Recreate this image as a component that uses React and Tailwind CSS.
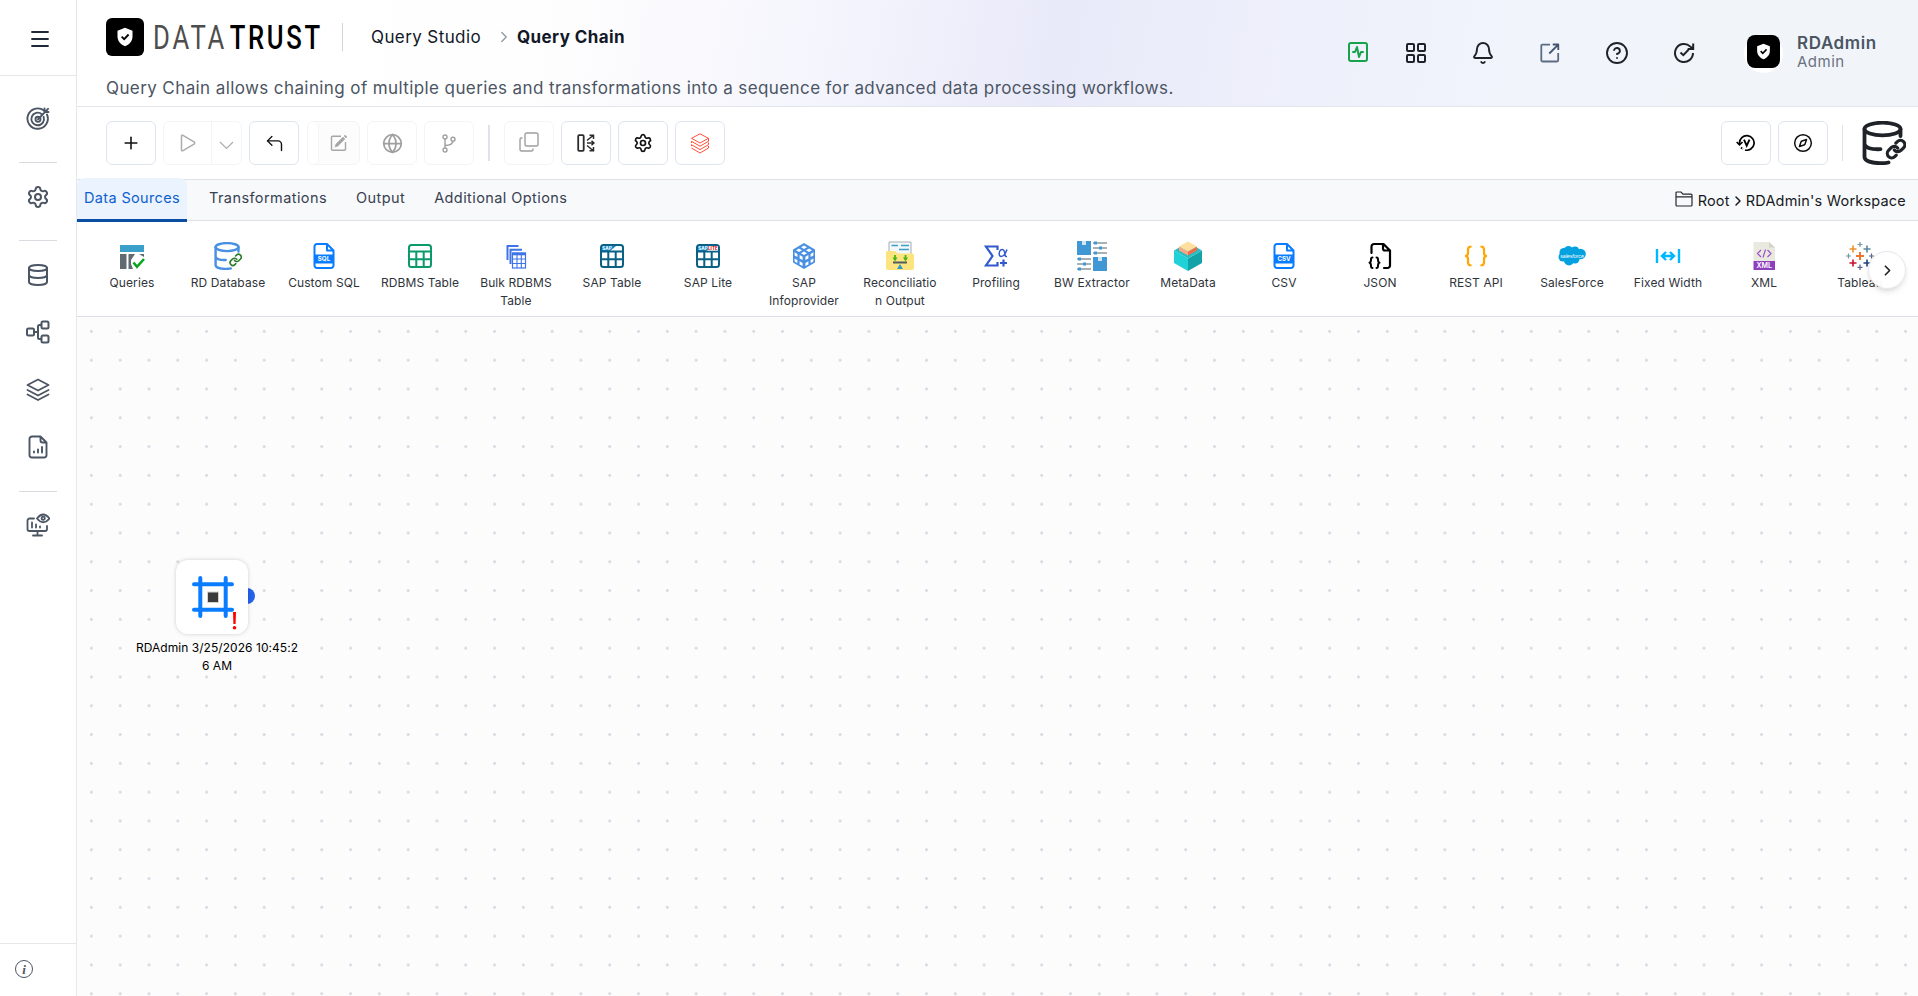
import React from 'react';
import { Menu, Settings, Database, Plus, ChevronRight, CornerUpLeft, Globe, Bell, CircleHelp, Compass, LayoutGrid, SquareActivity } from 'lucide-react';

const Shield = ({ size }) => (
    <svg width={size} height={size} viewBox="0 0 24 24">
        <path d="M12 1 L21 4.5 V11 C21 17 17 21 12 23 C7 21 3 17 3 11 V4.5 Z" fill="#fff" />
        <path d="M8 11.5 L11 14.5 L16.3 9" fill="none" stroke="#000" strokeWidth="2.2" />
    </svg>
);

// Sidebar icons
const TargetIcon = () => (
    <svg width="24" height="24" viewBox="0 0 24 24" fill="none" stroke="currentColor" strokeWidth="1.9" strokeLinecap="round">
        <path d="M18 3.6 A10.2 10.2 0 1 0 21 7.5" />
        <path d="M15.8 7.2 A6.3 6.3 0 1 0 17.6 9.8" />
        <circle cx="12" cy="12.3" r="2.5" />
        <path d="M12 12.3 L22 1.8 M18.5 4.5 V1.5 M19 5 H22.5" />
    </svg>
);

const FlowIcon = () => (
    <svg width="24" height="24" viewBox="0 0 24 24" fill="none" stroke="currentColor" strokeWidth="2">
        <rect x="1" y="8.5" width="7" height="7" rx="1.5" />
        <rect x="15.5" y="1.5" width="7" height="7" rx="1.5" />
        <rect x="15.5" y="15.5" width="7" height="7" rx="1.5" />
        <path d="M8 12 H12 M15.5 5 H13.5 A1.5 1.5 0 0 0 12 6.5 V17.5 A1.5 1.5 0 0 0 13.5 19 H15.5" />
    </svg>
);

const LayersIcon = () => (
    <svg width="24" height="24" viewBox="0 0 24 24" fill="none" stroke="currentColor" strokeWidth="1.8" strokeLinejoin="round" strokeLinecap="round">
        <path d="M12 1.5 L22.5 7 L12 12.5 L1.5 7 Z M1.5 12 L12 17.5 L22.5 12 M1.5 16.5 L12 22 L22.5 16.5" />
    </svg>
);

const ReportIcon = () => (
    <svg width="24" height="24" viewBox="0 0 24 24" fill="none" stroke="currentColor" strokeWidth="1.9" strokeLinejoin="round" strokeLinecap="round">
        <path d="M14.5 1.5 H6 A2.5 2.5 0 0 0 3.5 4 V20 A2.5 2.5 0 0 0 6 22.5 H18 A2.5 2.5 0 0 0 20.5 20 V7.5 Z M14.5 1.5 V5.5 A2 2 0 0 0 16.5 7.5 H20.5 M8 16.5 V17.5 M12 14.5 V17.5 M16 12 V17.5" />
    </svg>
);

const MonitorIcon = () => (
    <svg width="24" height="24" viewBox="0 0 24 24" fill="none" stroke="currentColor" strokeWidth="1.8" strokeLinecap="round">
        <path d="M8 5.5 H3.5 A2 2 0 0 0 1.5 7.5 V16 A2 2 0 0 0 3.5 18 H19 A2 2 0 0 0 21 16 V13 M11.5 18 V22 M7 22.5 H16 M6 9.5 V14.5 M10 11.5 V14.5 M14 13.5 V14.5" />
        <path d="M11 5.5 Q17 -2.5 23.5 5.5 Q17 13 11 5.5 Z" />
        <circle cx="17.2" cy="5.3" r="1.6" />
    </svg>
);

// Header icons
const ExternalIcon = () => (
    <svg width="20" height="20" viewBox="0 0 20 20" fill="none" stroke="#5b6b82" strokeWidth="1.8" strokeLinejoin="round">
        <path d="M10 1.7 H2.5 A1 1 0 0 0 1.3 2.9 V17.3 A1.2 1.2 0 0 0 2.5 18.5 H17 A1.2 1.2 0 0 0 18.2 17.3 V10" />
        <path d="M9.3 10.5 L18 1.8 M12.8 1.5 H18.3 V7" stroke="#44546c" />
    </svg>
);

const CheckCircleIcon = () => (
    <svg width="22" height="22" viewBox="0 0 22 22" fill="none" stroke="currentColor" strokeWidth="2">
        <path d="M20 11 A9 9 0 1 1 17.3 4.6 L19.5 6.5 M20.2 1.5 V7 H14.7" />
        <path d="M7.5 10.5 L10.3 13.2 L15.5 7.8" />
    </svg>
);

// Toolbar icons
const PlayIcon = () => (
    <svg width="18" height="18" viewBox="0 0 18 18" fill="none" stroke="currentColor" strokeWidth="1.5" strokeLinejoin="round">
        <path d="M2.5 2.2 Q2.5 .7 4 1.3 L15 7.8 Q16.5 9 15 10.2 L4 16.7 Q2.5 17.3 2.5 15.8 Z" />
    </svg>
);

const EditIcon = () => (
    <svg width="18" height="18" viewBox="0 0 18 18" fill="none" stroke="currentColor" strokeWidth="1.4">
        <path d="M11 2.3 H2.5 A1 1 0 0 0 1.5 3.3 V15.3 A1 1 0 0 0 2.5 16.3 H14.5 A1 1 0 0 0 15.5 15.3 V8" />
        <path d="M5 13 L5.7 10.3 L13 3 L15 5 L7.7 12.3 Z M14 2 L15 1 L17 3 L16 4 Z" fill="currentColor" strokeWidth=".5" />
    </svg>
);

const BranchIcon = () => (
    <svg width="14" height="19" viewBox="0 0 14 19" fill="none" stroke="currentColor" strokeWidth="1.4">
        <circle cx="3" cy="3" r="2" />
        <circle cx="3" cy="16" r="2" />
        <circle cx="11" cy="5.2" r="2" />
        <path d="M3 5 V14 M3 11.5 Q10.5 11.5 11 7.2" />
    </svg>
);

const CopyIcon = () => (
    <svg width="20" height="20" viewBox="0 0 20 20" fill="none" stroke="currentColor" strokeWidth="1.4">
        <rect x="6" y="1" width="13" height="13" rx="1.8" />
        <path d="M3.5 6 H2.5 A1.5 1.5 0 0 0 1 7.5 V17.5 A1.5 1.5 0 0 0 2.5 19 H12.5 A1.5 1.5 0 0 0 14 17.5 V16.5" />
    </svg>
);

const SplitIcon = () => (
    <svg width="18" height="18" viewBox="0 0 18 18" fill="none" stroke="#2b2b2b" strokeWidth="1.5">
        <rect x="1.2" y="1.2" width="5.5" height="15.6" rx="1" strokeWidth="1.8" />
        <path d="M10 6.5 L16 1.5 M12.5 1.2 H16.5 V5 M10 9 H17 M14.5 6.7 L17 9 L14.5 11.3 M10 11.5 L16 16.5 M12.5 16.8 H16.5 V13" />
    </svg>
);

const StackIcon = () => (
    <svg width="20" height="21" viewBox="0 0 20 21" fill="none" stroke="#ff4f38" strokeWidth="1">
        <path d="M10 .8 L18.5 5.3 L10 10 L1.5 5.3 Z" />
        <path d="M1.5 8.3 L10 13.2 L18.5 8.3 V5.3 M1.5 11.7 L10 16.6 L18.5 11.7 V9.5 M1.5 15 L10 20 L18.5 15 V12.8 M1.5 8.3 V10 M1.5 11.7 V13.2" />
    </svg>
);

const VersionIcon = () => (
    <svg width="19" height="18" viewBox="0 0 19 18" fill="none" stroke="#000" strokeWidth="1.7">
        <path d="M3.5 10 V9 A7.3 7.3 0 1 1 9 16" />
        <path d="M5 13.5 L7 15.3" strokeDasharray="1.5 1" />
        <path d="M.7 8 L3.5 10.8 L6.5 8" />
        <path d="M8 5.7 L10.7 11.7 L13.5 5.7" strokeWidth="1.9" />
    </svg>
);

const DbLink = ({ size, color, link, linkWidth = 3.6 }) => (
    <svg width={size} height={size} viewBox="0 0 44 44" fill="none" stroke={color} strokeWidth="3.8" strokeLinecap="round">
        <ellipse cx="20.5" cy="8" rx="18" ry="6.3" />
        <path d="M2.5 8 V36 C2.5 40 10 42.2 18 42.2 Q23 42.3 26.5 41.5 M38.5 8 V15 M2.5 23.5 C4 27 11 28.5 18.5 28.2" />
        <g stroke={link} strokeWidth={linkWidth} transform="translate(23.5 17.5) scale(.88)">
            <path d="M10 13a5 5 0 0 0 7.54.54l3-3a5 5 0 0 0-7.07-7.07l-1.72 1.71" />
            <path d="M14 11a5 5 0 0 0-7.54-.54l-3 3a5 5 0 0 0 7.07 7.07l1.71-1.71" />
        </g>
    </svg>
);

const FolderIcon = () => (
    <svg width="18" height="16" viewBox="0 0 18 16" fill="none" stroke="#23272d" strokeWidth="1.2">
        <path d="M1 14 V2 A1 1 0 0 1 2 1 H6 L8 3.2 H16 A1 1 0 0 1 17 4.2 V14 A1 1 0 0 1 16 15 H2 A1 1 0 0 1 1 14 Z M1 5.8 H17" />
    </svg>
);

// Data source icons
const FileTag = ({ tag }) => (
    <svg width="28" height="28" viewBox="0 0 28 28" fill="none" stroke="#0a7cff" strokeWidth="2" strokeLinejoin="round">
        <path d="M17 2 H7 A2.5 2.5 0 0 0 4.5 4.5 V23.5 A2.5 2.5 0 0 0 7 26 H21 A2.5 2.5 0 0 0 23.5 23.5 V8.5 Z M17 2 V8.5 H23.5" />
        <rect x="4" y="12.5" width="20" height="9" fill="#0a7cff" stroke="none" />
        <text x="14" y="19.3" fill="#fff" stroke="none" fontSize="6.2" fontWeight="700" textAnchor="middle" fontFamily="Inter, sans-serif">{tag}</text>
    </svg>
);

const TableIcon = ({ color, brand, lite }) => (
    <svg width="28" height="28" viewBox="0 0 28 28" fill="none" stroke={color} strokeWidth="2">
        <rect x="3" y="3" width="22" height="22" rx="2.5" />
        {brand && <path d="M4 4 H18 L12 9 H4 Z" fill="#0a86c9" stroke="none" />}
        <path d="M3 9.5 H25 M3 17.3 H25 M10.3 9.5 V25 M17.7 9.5 V25" />
        {brand && <text x="4.3" y="8.3" fill="#fff" stroke="none" fontSize="4.6" fontWeight="700" fontFamily="Inter, sans-serif">SAP</text>}
        {lite && <rect x="14" y="4" width="10" height="4.5" fill="#fff" stroke="none" />}
        {lite && <text x="14" y="8.1" fill="#d00" stroke="none" fontSize="4.6" fontWeight="700" fontFamily="Inter, sans-serif">LITE</text>}
    </svg>
);

const QueriesIcon = () => (
    <svg width="28" height="28" viewBox="0 0 28 28">
        <path d="M2 3 H26 V10 H2 Z" fill="#3aa0c9" />
        <path d="M2 12 H8.5 V27 H2 Z M10.5 12 H17 L13 18 V22 L15 27 H10.5 Z M21 12 H26 V15 Z" fill="#5f6b70" />
        <path d="M15.5 20.5 L19 24.8 L26 17" fill="none" stroke="#09a51d" strokeWidth="2.6" />
    </svg>
);

const BulkIcon = () => (
    <svg width="28" height="28" viewBox="0 0 28 28" fill="none" stroke="#3f73e8" strokeWidth="2">
        <path d="M16.5 4 H5.5 V18 M20 7.8 H8.5 V22" strokeWidth="2" />
        <rect x="10.5" y="11" width="13" height="15" strokeWidth="1.2" />
        <path d="M10 12 H24" strokeWidth="2.6" />
        <path d="M10.5 17 H23.5 M10.5 21.5 H23.5 M15 12 V26 M19.3 12 V26" strokeWidth="1.1" />
    </svg>
);

const CubeIcon = () => (
    <svg width="28" height="28" viewBox="0 0 28 28">
        <path d="M14 1 L25 7.5 V20.5 L14 27 L3 20.5 V7.5 Z" fill="#4a90e2" />
        <g fill="#fff">
            <path d="M14 3.6 L17 5.3 L14 7 L11 5.3 Z M9 6.4 L12 8.2 L9 10 L6 8.2 Z M19 6.4 L22 8.2 L19 10 L16 8.2 Z M14 9.4 L17 11.2 L14 13 L11 11.2 Z" />
            <path d="M4.6 10.3 L7.4 12 V15 L4.6 13.4 Z M9.6 13 L12.6 14.8 V18 L9.6 16.4 Z M4.6 16.4 L7.4 18 V21 L4.6 19.4 Z M9.6 19.3 L12.6 21 V24 L9.6 22.4 Z" />
            <path d="M23.4 10.3 L20.6 12 V15 L23.4 13.4 Z M18.4 13 L15.4 14.8 V18 L18.4 16.4 Z M23.4 16.4 L20.6 18 V21 L23.4 19.4 Z M18.4 19.3 L15.4 21 V24 L18.4 22.4 Z" />
        </g>
    </svg>
);

const ReconIcon = () => (
    <svg width="28" height="30" viewBox="0 0 28 30">
        <path d="M3 1 H25 V14 H3 Z" fill="#f4f7f8" stroke="#a5adb0" />
        <path d="M5.5 4.5 H12 M15 4.5 H23 M13 8.5 H23" stroke="#3aa0c9" strokeWidth="1.4" />
        <path d="M0 11.5 Q0 10 1.5 10 H9 L12 12.5 H26.5 Q28 12.5 28 14 V27 Q28 29 26 29 H2 Q0 29 0 27 Z" fill="#fde47f" />
        <path d="M9 14 V18 M19.5 14 V18" stroke="#45b514" strokeWidth="1.8" />
        <path d="M6.5 16.5 L9 20.5 L11.5 16.5 Z M17 16.5 L19.5 20.5 L22 16.5 Z" fill="#45b514" />
        <path d="M7 21.5 H21" stroke="#4e5c62" strokeWidth="2" />
        <path d="M14 23 L17 28 H11 Z" fill="#2e9ac4" />
    </svg>
);

const ProfilingIcon = () => (
    <svg width="28" height="28" viewBox="0 0 28 28" fill="none" stroke="#3359cf" strokeWidth="2.2">
        <path d="M15.5 8 V4.5 H4 L10.5 14 L4 23.5 H15.5 V20" />
        <path d="M25 7.5 Q22.5 14.5 19.5 14.5 Q17 14.5 17.2 11.5 Q17.5 7.5 20.5 7.5 Q22.5 7.5 23 13 Q23.5 15 25 14.5" strokeWidth="1.5" />
        <path d="M21.5 17.5 V24.5 M18 21 H25" />
    </svg>
);

const BwIcon = () => (
    <svg width="30" height="30" viewBox="0 0 30 30">
        <path d="M0 0 H14 V14 H0 Z M16 16 H30 V30 H16 Z" fill="#4197d3" />
        <path d="M5 0 H9 V4 H5 Z M21 16 H25 V20 H21 Z" fill="#cfe6f5" />
        <path d="M16 2 H30 M16 7 H30 M16 12 H30 M0 18 H14 M0 23 H14 M0 28 H14" stroke="#56636c" strokeWidth="1.1" />
        <path d="M17 .5 H20 V3.5 H17 Z M22 5.5 H25 V8.5 H22 Z M17 10.5 H20 V13.5 H17 Z M1 16.5 H4 V19.5 H1 Z M6 21.5 H9 V24.5 H6 Z M1 26.5 H4 V29.5 H1 Z" fill="#4197d3" />
    </svg>
);

const MetaIcon = () => (
    <svg width="28" height="30" viewBox="0 0 28 30">
        <path d="M0 9.5 L14 17.5 V30 L0 22 Z" fill="#1fd2d8" />
        <path d="M28 9.5 L14 17.5 V30 L28 22 Z" fill="#13a2a8" />
        <path d="M0 9.5 L14 1.5 L28 9.5 L14 17.5 Z" fill="#27bfc4" />
        <path d="M5 5.5 L14 10.5 V14.5 L5 9.5 Z" fill="#ffa482" />
        <path d="M23 5.5 L14 10.5 V14.5 L23 9.5 Z" fill="#f2694c" />
        <path d="M5 5.5 L14 .5 L23 5.5 L14 10.5 Z" fill="#ffdf9e" />
    </svg>
);

const JsonIcon = () => (
    <svg width="28" height="28" viewBox="0 0 28 28" fill="none" stroke="#000" strokeWidth="2.2" strokeLinecap="round" strokeLinejoin="round">
        <path d="M5.5 11 V4.5 A2.5 2.5 0 0 1 8 2 H17.5 L24 8.5 V23.5 A2.5 2.5 0 0 1 21.5 26 H18 M17 2 V6.5 A2 2 0 0 0 19 8.5 H24" />
        <path d="M6.5 15.5 Q5 15.5 5 17.5 Q5 20.5 3.5 20.7 Q5 21 5 24 Q5 26 6.5 26 M10.5 15.5 Q12 15.5 12 17.5 Q12 20.5 13.5 20.7 Q12 21 12 24 Q12 26 10.5 26" strokeWidth="2" />
    </svg>
);

const BracesIcon = () => (
    <svg width="28" height="28" viewBox="0 0 28 28" fill="none" stroke="#ffa600" strokeWidth="2.2">
        <path d="M9.5 4.5 Q6 4.5 6 7.5 V11 Q6 14 3 14 Q6 14 6 17 V20.5 Q6 23.5 9.5 23.5 M18.5 4.5 Q22 4.5 22 7.5 V11 Q22 14 25 14 Q22 14 22 17 V20.5 Q22 23.5 18.5 23.5" />
    </svg>
);

const SalesIcon = () => (
    <svg width="28" height="28" viewBox="0 0 28 28">
        <g fill="#03a1e0">
            <circle cx="6" cy="10.5" r="4.5" />
            <circle cx="10.5" cy="8.5" r="4.5" />
            <circle cx="17" cy="8.5" r="4" />
            <circle cx="22.5" cy="12" r="5.3" />
            <circle cx="5" cy="15" r="4.5" />
            <circle cx="11" cy="18.5" r="5" />
            <circle cx="17" cy="17" r="4.5" />
            <rect x="6" y="8" width="15" height="10" />
        </g>
        <text x="14" y="15.5" fill="#fff" fontSize="5.2" fontStyle="italic" textAnchor="middle" fontFamily="Liberation Sans, sans-serif">salesforce</text>
    </svg>
);

const WidthIcon = () => (
    <svg width="28" height="28" viewBox="0 0 28 28" fill="none" stroke="#00b8ff" strokeWidth="2.4">
        <path d="M3 7 V21 M25 7 V21 M8.5 14 H19.5 M12 10 L8 14 L12 18 M16 10 L20 14 L16 18" />
    </svg>
);

const XmlIcon = () => (
    <svg width="28" height="28" viewBox="0 0 28 28">
        <path d="M3.5 0 H19 L25 5.5 V19 H3.5 Z" fill="#e9e9e0" />
        <path d="M19 0 V5.5 H25 Z" fill="#d2d2c6" />
        <path d="M3.5 19 H25 V28 H3.5 Z" fill="#8e3fbf" />
        <path d="M11 8 L7.5 11.5 L11 15 M17.5 8 L21 11.5 L17.5 15 M15.5 7.5 L13 15.5" fill="none" stroke="#9a4fc6" strokeWidth="1.2" />
        <text x="14.2" y="26.3" fill="#fff" fontSize="7" fontWeight="600" textAnchor="middle" fontFamily="Inter, sans-serif">XML</text>
    </svg>
);

const TableauIcon = () => (
    <svg width="28" height="28" viewBox="0 0 28 28" strokeWidth="1.6">
        <path d="M14 10 V18 M10 14 H18" stroke="#eb7632" strokeWidth="2" />
        <path d="M7 3.5 V10.5 M3.5 7 H10.5" stroke="#eb912c" />
        <path d="M21 3.5 V10.5 M17.5 7 H24.5" stroke="#59879b" />
        <path d="M7 17.5 V24.5 M3.5 21 H10.5" stroke="#c8102e" />
        <path d="M21 17.5 V24.5 M17.5 21 H24.5" stroke="#1f447e" />
        <path d="M14 0 V5 M11.5 2.5 H16.5 M2.5 11.5 V16.5 M0 14 H5" stroke="#7099a6" strokeWidth="1.2" />
        <path d="M14 22.5 V28 M11.5 25.3 H16.5 M25.5 11.5 V16.5 M23 14 H28" stroke="#5b6591" strokeWidth="1.2" />
    </svg>
);

const ChainNodeIcon = () => (
    <svg width="42" height="42" viewBox="0 0 42 42" fill="none" stroke="#0a7cff" strokeWidth="4" strokeLinecap="round">
        <path d="M2 8.3 H40 M2 33.7 H40 M8.3 2 V40 M33.7 2 V40" />
        <rect x="15.5" y="16" width="11" height="10.5" fill="#3b3b3b" stroke="#d4d4d4" strokeWidth="1" />
    </svg>
);

const sources = [
    { label: 'Queries', icon: <QueriesIcon /> },
    { label: 'RD Database', icon: <DbLink size={28} color="#4a90e2" link="#2c7a2c" linkWidth={2.8} /> },
    { label: 'Custom SQL', icon: <FileTag tag="SQL" /> },
    { label: 'RDBMS Table', icon: <TableIcon color="#0c9a6c" /> },
    { label: 'Bulk RDBMS\nTable', icon: <BulkIcon /> },
    { label: 'SAP Table', icon: <TableIcon color="#0b6085" brand /> },
    { label: 'SAP Lite', icon: <TableIcon color="#0b6085" brand lite /> },
    { label: 'SAP\nInfoprovider', icon: <CubeIcon /> },
    { label: 'Reconciliatio\nn Output', icon: <ReconIcon /> },
    { label: 'Profiling', icon: <ProfilingIcon /> },
    { label: 'BW Extractor', icon: <BwIcon /> },
    { label: 'MetaData', icon: <MetaIcon /> },
    { label: 'CSV', icon: <FileTag tag="CSV" /> },
    { label: 'JSON', icon: <JsonIcon /> },
    { label: 'REST API', icon: <BracesIcon /> },
    { label: 'SalesForce', icon: <SalesIcon /> },
    { label: 'Fixed Width', icon: <WidthIcon /> },
    { label: 'XML', icon: <XmlIcon /> },
    { label: 'Tableau', icon: <TableauIcon /> },
];

const SideDivider = () => <div className="h-px w-[38px] shrink-0 bg-[#d8dbdf]" />;

const Sidebar = () => (
    <aside className="flex w-[77px] shrink-0 flex-col border-r border-[#e5e7eb] bg-white text-[#4b5563]">
        <div className="flex h-[76px] shrink-0 items-center border-b border-[#e5e7eb] pt-[3px] pl-7 text-[#1f2937]">
            <Menu size={24} strokeWidth={1.8} />
        </div>
        <nav className="flex flex-1 flex-col items-center">
            <div className="my-[31px]"><TargetIcon /></div>
            <SideDivider />
            <div className="mt-[22px] mb-[31px]"><Settings size={24} /></div>
            <SideDivider />
            <div className="mt-[22px] flex flex-col gap-[33.3px]">
                <Database size={24} />
                <FlowIcon />
                <LayersIcon />
                <ReportIcon />
            </div>
            <div className="mt-8"><SideDivider /></div>
            <div className="mt-[21px]"><MonitorIcon /></div>
        </nav>
        <div className="flex h-[53px] shrink-0 items-center border-t border-[#e5e7eb] pb-0.5 pl-[15px]">
            <span className="flex h-[18px] w-[18px] items-center justify-center rounded-full border border-[#4b5563] font-['Liberation_Serif',serif] text-[13px] leading-none font-bold italic">i</span>
        </div>
    </aside>
);

const HeaderIcon = ({ children }) => <button className="flex w-[67px] justify-center">{children}</button>;

const Header = () => (
    <header className="flex h-[107px] shrink-0 justify-between border-b border-[#e2e5ea] bg-[linear-gradient(100deg,#fff_0%,#fefefe_25%,#f5f5fd_40%,#e9eaf9_53%,#eef0fb_67%,#f1f5fb_80%,#f1f5f9_100%)] pl-[29px]">
        <div>
            <div className="flex h-[73px] items-center">
                <div className="flex h-[38px] w-[38px] items-center justify-center rounded-md bg-black"><Shield size={20} /></div>
                <svg width="180" height="48" viewBox="0 0 180 48" className="ml-[9px]" fontFamily="Roboto, sans-serif" fontSize="32.5" fontWeight="500">
                    <g transform="scale(.79 1)">
                        <text x="0" y="36" fill="#4d4d4d" fontWeight="400" letterSpacing="3.6">DATA</text>
                        <text x="97" y="36" fill="#000" letterSpacing="3.4">TRUST</text>
                    </g>
                </svg>
                <div className="ml-[9px] h-7 w-px bg-[#d1d5db]" />
                <span className="ml-7 w-[110px] pt-0.5 text-[17px] tracking-[.4px] whitespace-nowrap text-[#111827]">Query Studio</span>
                <ChevronRight size={18} strokeWidth={1.6} className="mr-1 ml-[14px] text-[#8d939e]" />
                <span className="pt-0.5 text-[17px] font-bold tracking-[.4px] text-[#111827]">Query Chain</span>
            </div>
            <p className="text-[17px] leading-[30px] tracking-[.4px] text-[#4b5563]">Query Chain allows chaining of multiple queries and transformations into a sequence for advanced data processing workflows.</p>
        </div>
        <div className="flex h-[106px] items-center pr-[38px] text-[#1f2328]">
            <button className="flex w-[49px] justify-center pb-0.5"><SquareActivity size={24} color="#16a34a" /></button>
            <HeaderIcon><LayoutGrid size={24} /></HeaderIcon>
            <HeaderIcon><Bell size={24} strokeWidth={1.9} /></HeaderIcon>
            <HeaderIcon><ExternalIcon /></HeaderIcon>
            <HeaderIcon><CircleHelp size={24} strokeWidth={1.9} /></HeaderIcon>
            <HeaderIcon><CheckCircleIcon /></HeaderIcon>
            <div className="ml-[27px] flex h-[39px] w-[39px] justify-center rounded-full bg-white pt-px">
                <div className="flex h-[33px] w-[33px] items-center justify-center rounded-lg bg-black"><Shield size={17} /></div>
            </div>
            <div className="ml-[14px] w-[83px] pb-[3px]">
                <div className="text-[17px] leading-5 font-semibold tracking-[.6px] text-[#4b5563]">RDAdmin</div>
                <div className="text-[15px] leading-[17px] tracking-[.5px] text-[#6b7280]">Admin</div>
            </div>
        </div>
    </header>
);

const ToolButton = ({ disabled, children }) => (
    <button className={`flex h-11 w-[50px] shrink-0 items-center justify-center rounded-md border border-[#dfe5ee] bg-white text-[#111] ${disabled ? 'opacity-40' : ''}`}>
        {children}
    </button>
);

const Toolbar = () => (
    <div className="flex h-[73px] shrink-0 items-center border-b border-[#dee2e6] bg-white pr-3 pl-[29px]">
        <div className="flex items-center gap-[7px]">
            <ToolButton><Plus size={20} strokeWidth={1.9} /></ToolButton>
            <div className="flex h-11 w-[79px] rounded-md border border-[#dfe5ee] text-[#333] opacity-40">
                <div className="flex w-12 items-center justify-center border-r border-[#dfe5ee]"><PlayIcon /></div>
                <div className="flex flex-1 items-center justify-center pt-1">
                    <svg width="15" height="9" viewBox="0 0 15 9" fill="none" stroke="currentColor" strokeWidth="1.2"><path d="M1 1 L7.5 7.5 L14 1" /></svg>
                </div>
            </div>
            <ToolButton><CornerUpLeft size={21} strokeWidth={1.6} /></ToolButton>
            <div className="ml-px flex h-11 w-[53px] rounded-md border border-[#dfe5ee] bg-[#f8f8f8] text-[#222] opacity-40">
                <div className="w-[11px] rounded-md border-r border-[#dfe5ee] bg-white" />
                <div className="flex flex-1 items-center justify-center"><EditIcon /></div>
            </div>
            <ToolButton disabled><Globe size={21} strokeWidth={2} /></ToolButton>
            <ToolButton disabled><BranchIcon /></ToolButton>
        </div>
        <div className="mr-[14px] ml-[14px] h-9 w-0.5 bg-[#dfe2e8]" />
        <div className="flex items-center gap-[7px]">
            <ToolButton disabled><div className="pb-0.5"><CopyIcon /></div></ToolButton>
            <ToolButton><SplitIcon /></ToolButton>
            <ToolButton><Settings size={20} strokeWidth={2} /></ToolButton>
            <ToolButton><StackIcon /></ToolButton>
        </div>
        <div className="ml-auto flex items-center gap-[7px]">
            <ToolButton><div className="pr-0.5"><VersionIcon /></div></ToolButton>
            <ToolButton><Compass size={20} strokeWidth={1.8} /></ToolButton>
        </div>
        <div className="mr-[19px] ml-[14px] h-9 w-px bg-[#dfe2e8]" />
        <DbLink size={44} color="#1f2328" link="#1f2328" />
    </div>
);

const Tabs = () => (
    <div className="flex h-[41px] shrink-0 items-start border-b border-[#dee2e6] bg-[#f8f9fb] text-[14.5px] text-[#374151]">
        <div className="relative z-10 -mt-0.5 flex h-11 w-[110px] items-center justify-center rounded-t-lg border-b-[3px] border-[#0a4ea3] bg-[#ebf3fe] pb-0.5 tracking-[.35px] whitespace-nowrap text-[#0f5fcf]">Data Sources</div>
        <div className="flex h-9 items-center gap-[29px] pl-[22px] tracking-[.42px]">
            <span>Transformations</span>
            <span>Output</span>
            <span>Additional Options</span>
        </div>
        <div className="ml-auto flex h-[42px] items-center pr-3 text-[#16191d]">
            <div className="pb-[5px]"><FolderIcon /></div>
            <span className="ml-[5px] tracking-[.2px]">Root</span>
            <ChevronRight size={16} strokeWidth={2.2} />
            <span className="tracking-[.2px]">RDAdmin's Workspace</span>
        </div>
    </div>
);

const SourceRibbon = () => (
    <div className="relative flex h-24 shrink-0 overflow-hidden border-b border-[#dbdfe5] bg-white pt-[21px] pl-[7px]">
        {sources.map((s) => (
            <div key={s.label} className="flex w-24 shrink-0 flex-col items-center">
                <div className="flex h-7 items-center justify-center">{s.icon}</div>
                <span className="mt-1 text-center text-xs leading-[18px] tracking-[.1px] whitespace-pre-line text-[#2f343b]">{s.label}</span>
            </div>
        ))}
        <button className="absolute top-[30px] right-3 flex h-[38px] w-[38px] items-center justify-center rounded-full border border-[#e5e7eb] bg-white/95 text-[#222] shadow-md">
            <ChevronRight size={17} strokeWidth={2.4} />
        </button>
    </div>
);

const Canvas = () => (
    <div className="relative flex-1 bg-[#fcfcfc] bg-[radial-gradient(circle,#d3d9e2_1px,transparent_1.7px)] bg-size-[28.8px_28.8px]">
        <div className="absolute top-[243px] left-[50px] flex w-[180px] flex-col items-center">
            <div className="relative mr-[10px] h-[74px] w-[72px]">
                <div className="absolute top-7 right-[-7px] h-4 w-4 rounded-full bg-[#2563eb]" />
                <div className="relative flex h-full w-full items-center justify-center rounded-xl bg-white pl-px shadow-[0_0_4px_rgba(0,0,0,.18)]">
                    <ChainNodeIcon />
                    <svg width="5" height="18" viewBox="0 0 5 18" className="absolute right-[11px] bottom-[4px]" fill="#f00">
                        <path d="M1 0 H4 L3.6 12 H1.4 Z" />
                        <circle cx="2.5" cy="15.8" r="1.8" />
                    </svg>
                </div>
            </div>
            <span className="mt-[5px] text-center text-xs leading-[18px] tracking-[.05px] whitespace-pre text-black">{'RDAdmin 3/25/2026 10:45:2\n6 AM'}</span>
        </div>
    </div>
);

export default function App() {
    return (
        <div className="flex h-[996px] w-full overflow-hidden bg-white font-['Inter','Noto_Sans',sans-serif]">
            <Sidebar />
            <main className="flex min-w-0 flex-1 flex-col">
                <Header />
                <Toolbar />
                <Tabs />
                <SourceRibbon />
                <Canvas />
            </main>
        </div>
    );
}
